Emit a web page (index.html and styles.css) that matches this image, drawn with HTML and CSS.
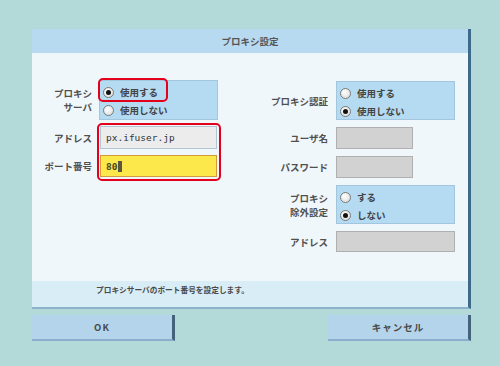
FILE: index.html
```html
<html>
<head>
<meta charset="utf-8">
<link rel="stylesheet" href="styles.css">
</head>
<body>
<div class="screen">
  <div class="dialog">
    <div class="titlebar">プロキシ設定</div>
    <div class="content">
      <div class="col leftcol">
        <div class="label two">プロキシ<br>サーバ</div>
        <div class="radiobox">
          <div class="radio on"><span class="dot"></span>使用する</div>
          <div class="radio"><span class="dot"></span>使用しない</div>
        </div>
        <div class="label">アドレス</div>
        <div class="field addr">px.ifuser.jp</div>
        <div class="label">ポート番号</div>
        <div class="field port">80<span class="caret"></span></div>
        <div class="mark mark1"></div>
        <div class="mark mark2"></div>
      </div>
      <div class="col rightcol">
        <div class="label">プロキシ認証</div>
        <div class="radiobox">
          <div class="radio"><span class="dot"></span>使用する</div>
          <div class="radio on"><span class="dot"></span>使用しない</div>
        </div>
        <div class="label">ユーザ名</div>
        <div class="field gray short"></div>
        <div class="label">パスワード</div>
        <div class="field gray short"></div>
        <div class="label two">プロキシ<br>除外設定</div>
        <div class="radiobox">
          <div class="radio"><span class="dot"></span>する</div>
          <div class="radio on"><span class="dot"></span>しない</div>
        </div>
        <div class="label">アドレス</div>
        <div class="field gray"></div>
      </div>
    </div>
    <div class="status">プロキシサーバのポート番号を設定します。</div>
  </div>
  <div class="buttons">
    <div class="button">OK</div>
    <div class="button">キャンセル</div>
  </div>
</div>
</body>
</html>
```

FILE: styles.css
```css
body{
    margin: 0;
    background: #b3dad8;
    font-family: "Noto Sans CJK JP", "Noto Sans", sans-serif;
    color: #4a4a4a;
}

.screen{
    padding: 29px 0 0 32px;
    width: 439px;
}

.dialog{
    box-sizing: border-box;
    width: 439px;
    border-right: 3px solid #3d6a88;
    border-bottom: 2px solid #8cb2cc;
    background: #f0f7fb;
}

.titlebar{
    height: 24px;
    line-height: 24px;
    background: #b8daf1;
    text-align: center;
    font-size: 9.5px;
    font-weight: bold;
    color: #555;
}

.content{
    height: 228px;
    display: flex;
    align-items: flex-start;
    gap: 14px;
}

.col{
    display: grid;
    column-gap: 7px;
    row-gap: 6px;
    position: relative;
}

.leftcol{
    width: 186px;
    padding-top: 27px;
    grid-template-columns: 60px 119px;
    grid-template-rows: 40px 23px 22px;
}

.rightcol{
    padding-top: 28px;
    column-gap: 8px;
    row-gap: 7px;
    grid-template-columns: 96px 119px;
    grid-template-rows: 39px 22px 22px 39px 21px;
}

.label{
    display: flex;
    align-items: center;
    justify-content: flex-end;
    text-align: right;
    font-size: 9.5px;
    font-weight: bold;
    line-height: 14px;
    color: #505050;
}

.radiobox{
    box-sizing: border-box;
    background: #b5dbf3;
    border: 1px solid #a2c6de;
    padding: 2px 0 0 3px;
}

.radio{
    display: flex;
    align-items: center;
    gap: 6px;
    height: 18px;
    font-size: 9.5px;
    font-weight: bold;
    color: #444;
}

.dot{
    box-sizing: border-box;
    width: 11px;
    height: 11px;
    border-radius: 50%;
    border: 1px solid #7a7a7a;
    background: radial-gradient(circle at 40% 35%, #ffffff, #d8d8d8);
    display: flex;
    align-items: center;
    justify-content: center;
}

.radio.on .dot::after{
    content: "";
    width: 5px;
    height: 5px;
    border-radius: 50%;
    background: #111;
}

.field{
    box-sizing: border-box;
    border: 1px solid #b4c6d6;
    background: #ececec;
    font-family: "DejaVu Sans Mono", "Liberation Mono", monospace;
    font-size: 9.5px;
    color: #333;
    padding-left: 5px;
    display: flex;
    align-items: center;
}

.addr{
    margin: 0 1px 0 1px;
}

.port{
    margin: 0 1px 0 1px;
    background: #fde84c;
    border-color: #d29a3c;
    color: #4a4420;
    font-weight: bold;
}

.caret{
    display: inline-block;
    width: 4px;
    height: 11px;
    background: #5a5440;
    margin-left: 1px;
}

.gray{
    background: #d2d2d2;
    border-color: #b0b0b0;
}

.short{
    width: 77px;
}

.mark{
    position: absolute;
    box-sizing: border-box;
    border: 2px solid #e3001b;
    border-radius: 5px;
}

.mark1{
    left: 66px;
    top: 25px;
    width: 70px;
    height: 24px;
}

.mark2{
    left: 65px;
    top: 70px;
    width: 124px;
    height: 58px;
}

.status{
    height: 26px;
    box-sizing: border-box;
    background: #d9edf7;
    padding: 2px 0 0 64px;
    line-height: 14px;
    font-size: 7.7px;
    font-weight: bold;
    color: #4a4a4a;
}

.buttons{
    display: flex;
    justify-content: space-between;
    margin-top: 6px;
}

.button{
    box-sizing: border-box;
    width: 143px;
    height: 26px;
    background: #b3d4ea;
    border-right: 3px solid #44627a;
    border-bottom: 2px solid #8aaecb;
    text-align: center;
    line-height: 24px;
    font-size: 9.5px;
    font-weight: bold;
    letter-spacing: 1px;
    color: #4a4a4a;
}
```
